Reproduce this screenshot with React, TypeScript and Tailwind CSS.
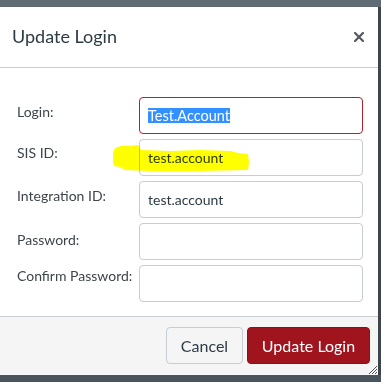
import React from "react";

const rows: { label: string; value?: string; selected?: boolean; error?: boolean; pt: string }[] = [
  { label: "Login:", value: "Test.Account", selected: true, error: true, pt: "pt-[5px]" },
  { label: "SIS ID:", value: "test.account", pt: "pt-[4px]" },
  { label: "Integration ID:", value: "test.account", pt: "pt-[5px]" },
  { label: "Password:", pt: "pt-[7px]" },
  { label: "Confirm Password:", pt: "pt-[1px]" },
];

export default function App() {
  return (
    <div
      className="w-[381px] h-[382px] bg-[#46515a] flex flex-col overflow-hidden"
      style={{ fontFamily: "Lato, 'Noto Sans', sans-serif" }}
    >
      <div className="h-[7px] bg-[#606b74] shrink-0" />
      <div className="flex">
        <div className="relative w-[378px] h-[368px] bg-white flex flex-col">
          {/* header */}
          <div className="h-[61px] shrink-0 border-b border-[#c7cdd1] flex items-center justify-between pl-[12px] pr-[14px]">
            <span className="text-[18px] text-[#2d3b45] leading-none pb-[2px]">Update Login</span>
            <svg width="10" height="10" viewBox="0 0 10 10" className="mb-[1px]">
              <path d="M1 1 L9 9 M9 1 L1 9" stroke="#55595e" strokeWidth="2.2" strokeLinecap="square" />
            </svg>
          </div>
          {/* body */}
          <div className="relative flex-1 pt-[29px] pl-[17px] pr-[14px] flex flex-col gap-[5px]">
            {rows.map((r) => (
              <div key={r.label} className="flex">
                <div className={`w-[122px] text-[14px] leading-[20px] text-[#3d454c] ${r.pt}`}>{r.label}</div>
                <div
                  className={`w-[224px] h-[37px] rounded-[4px] border bg-white flex items-center pl-[8px] text-[14px] text-[#2d3b45] ${
                    r.error ? "border-[#b0222c]" : "border-[#c7cdd1]"
                  }`}
                >
                  {r.value &&
                    (r.selected ? (
                      <span className="bg-[#3390ff] text-white leading-[15px] text-[14.5px]">{r.value}</span>
                    ) : (
                      <span className="leading-[15px]">{r.value}</span>
                    ))}
                </div>
              </div>
            ))}
            <svg
              className="absolute left-0 top-0 pointer-events-none mix-blend-multiply"
              width="378"
              height="250"
              viewBox="0 68 378 250"
            >
              <polygon
                points="113,153 115,148 121,146 130,146 138,145 141,150 170,151 200,150 231,151 238,153 248,154 249,162 248,170 200,171 150,171 125,170 120,167 114,166 113,162"
                fill="#ffff00"
              />
            </svg>
          </div>
          {/* footer */}
          <div className="h-[59px] shrink-0 border-t border-[#c7cdd1] bg-[#f5f5f5] flex justify-end items-start pt-[10px] pr-[8px] gap-[4px]">
            <button className="h-[37px] w-[77px] rounded-[4px] border border-[#c7cdd1] bg-[#f5f5f5] text-[16px] text-[#2d3b45]">
              Cancel
            </button>
            <button className="h-[37px] w-[123px] rounded-[4px] border border-[#8d0f18] bg-[#a0141e] text-[16px] text-white">
              Update Login
            </button>
          </div>
          <svg className="absolute right-[1px] bottom-[1px]" width="10" height="10" viewBox="0 0 10 10">
            <path d="M2 10 L10 2 M5 10 L10 5 M8 10 L10 8" stroke="#555" strokeWidth="1" />
          </svg>
        </div>
        <div className="w-[3px] bg-[#3b454d]" />
      </div>
      <div className="flex-1 bg-[#4a545c]" />
    </div>
  );
}
